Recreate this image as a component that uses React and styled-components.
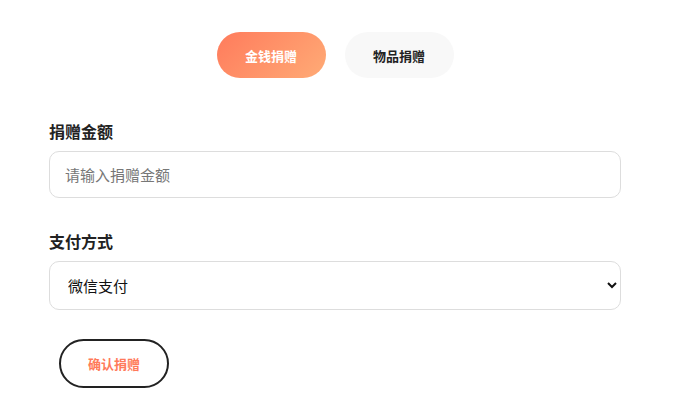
import React, { useState } from 'react';
import styled, { createGlobalStyle } from 'styled-components';

const GlobalStyle = createGlobalStyle`
  html, body {
    margin: 0;
    padding: 0;
    background: #fff;
    font-family: "Noto Sans CJK SC", "Noto Sans", sans-serif;
  }
`;

const Page = styled.div`
  width: 572px;
  padding: 32px 0 0 49px;
`;

const Tabs = styled.div`
  display: flex;
  justify-content: center;
  gap: 19px;
  margin-bottom: 42px;
`;

const Tab = styled.button`
  width: 109px;
  height: 46px;
  border: none;
  border-radius: 23px;
  font-family: inherit;
  font-size: 13px;
  font-weight: 700;
  cursor: pointer;
  color: ${p => (p.$active ? '#fff' : '#222')};
  background: ${p => (p.$active ? 'linear-gradient(135deg, #ff7b5c, #ffab76)' : '#f8f8f8')};
`;

const Field = styled.div`
  display: flex;
  flex-direction: column;
  margin-bottom: 32px;
`;

const Label = styled.label`
  font-size: 16px;
  font-weight: 700;
  color: #222;
  line-height: 22px;
  margin-bottom: 9px;
`;

const Input = styled.input`
  box-sizing: border-box;
  height: 47px;
  border: 1px solid #ddd;
  border-radius: 10px;
  padding: 0 15px;
  font-family: inherit;
  font-size: 15px;
  color: #222;
  outline: none;
  &::placeholder {
    color: #777;
  }
`;

const Select = styled.select`
  box-sizing: border-box;
  height: 49px;
  border: 1px solid #ddd;
  border-radius: 10px;
  padding: 0 14px;
  font-family: inherit;
  font-size: 15px;
  color: #111;
  background: #fff;
  outline: none;
`;

const Submit = styled.button`
  margin: -3px 0 0 10px;
  width: 110px;
  height: 49px;
  border: 2px solid #222;
  border-radius: 25px;
  background: #fff;
  color: #ff7a5a;
  font-family: inherit;
  font-size: 13px;
  font-weight: 700;
  cursor: pointer;
`;

export default function App() {
  const [tab, setTab] = useState('money');
  return (
    <>
      <GlobalStyle />
      <Page>
        <Tabs>
          <Tab $active={tab === 'money'} onClick={() => setTab('money')}>金钱捐赠</Tab>
          <Tab $active={tab === 'goods'} onClick={() => setTab('goods')}>物品捐赠</Tab>
        </Tabs>
        <Field>
          <Label>捐赠金额</Label>
          <Input placeholder="请输入捐赠金额" />
        </Field>
        <Field>
          <Label>支付方式</Label>
          <Select defaultValue="wechat">
            <option value="wechat">微信支付</option>
            <option value="alipay">支付宝</option>
          </Select>
        </Field>
        <Submit>确认捐赠</Submit>
      </Page>
    </>
  );
}
